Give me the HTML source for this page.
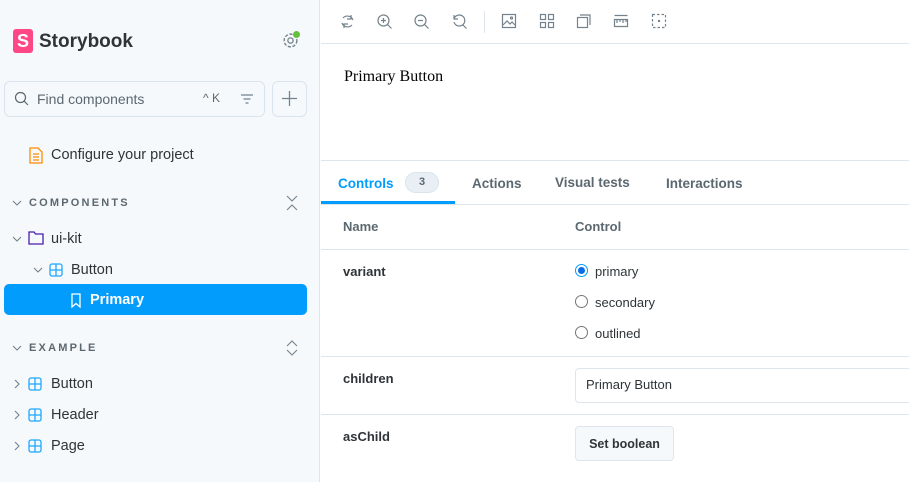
<!DOCTYPE html>
<html><head><meta charset="utf-8"><style>
*{box-sizing:border-box;margin:0;padding:0}
body{width:909px;height:482px;overflow:hidden;font-family:"Liberation Sans",sans-serif;position:relative;background:#fff;color:#2e3438}
.a{position:absolute}
#side{left:0;top:0;width:320px;height:482px;background:#f6f9fc;border-right:1px solid #dfe5ec}
.t{font-size:14.5px;color:#2e3438;white-space:nowrap}
.hd{font-size:11px;font-weight:bold;letter-spacing:2.2px;color:#5c6870}
.lbl{font-size:13px;font-weight:bold;color:#2e3438}
.hr{position:absolute;left:321px;right:0;height:1px;background:#dfe5ec}
svg{position:absolute;overflow:visible}
</style></head><body>
<div id="side" class="a">
  <div class="a" style="left:13px;top:29px;width:20px;height:24px;background:#ff4785;border-radius:3px;color:#fff;font-weight:bold;font-size:18px;text-align:center;line-height:24px">S</div>
  <div class="a" style="left:39px;top:31px;font-size:19px;font-weight:bold;color:#2e3438">Storybook</div>
  <svg style="left:282px;top:32px" width="17" height="17" viewBox="0 0 16 16"><circle cx="8" cy="8" r="6" fill="none" stroke="#73828c" stroke-width="1.3" stroke-dasharray="3 1.5"/><circle cx="8" cy="8" r="2.5" fill="none" stroke="#73828c" stroke-width="1.2"/></svg>
  <div class="a" style="left:293px;top:31px;width:7px;height:7px;border-radius:50%;background:#66bf3c"></div>
  <div class="a" style="left:4px;top:81px;width:261px;height:36px;border:1px solid #d9e4ef;border-radius:6px;background:#f6f9fc"></div>
  <svg style="left:14px;top:91px" width="16" height="16" viewBox="0 0 16 16"><circle cx="6.5" cy="6.5" r="5" fill="none" stroke="#5c6870" stroke-width="1.2"/><path d="M10.2 10.2L14 14" stroke="#5c6870" stroke-width="1.2"/></svg>
  <div class="a t" style="left:37px;top:91px;color:#5c6870;font-size:14px">Find components</div>
  <div class="a" style="left:203px;top:91px;font-size:12px;color:#5c6870">^ K</div>
  <svg style="left:240px;top:92px" width="14" height="14" viewBox="0 0 14 14"><path d="M1 3h12M3.5 7h7M5.5 11h3" stroke="#73828c" stroke-width="1.2"/></svg>
  <div class="a" style="left:272px;top:81px;width:35px;height:36px;border:1px solid #d9e4ef;border-radius:6px"></div>
  <svg style="left:281px;top:90px" width="17" height="17" viewBox="0 0 17 17"><path d="M8.5 1v15M1 8.5h15" stroke="#73828c" stroke-width="1.3"/></svg>
  <svg style="left:29px;top:147px" width="14" height="17" viewBox="0 0 14 17"><path d="M1 1h8l4 4v11H1z" fill="none" stroke="#ff8b00" stroke-width="1.3"/><path d="M4 7h6M4 10h6M4 13h6" stroke="#ff8b00" stroke-width="1.2"/></svg>
  <div class="a t" style="left:51px;top:147px">Configure your project</div>
  <svg style="left:12px;top:199px" width="10" height="8" viewBox="0 0 10 8"><path d="M1 2l4 4 4-4" fill="none" stroke="#73828c" stroke-width="1.1"/></svg>
  <div class="a hd" style="left:29px;top:197px">COMPONENTS</div>
  <svg style="left:286px;top:195px" width="12" height="16" viewBox="0 0 12 16"><path d="M1 1l5 5 5-5M1 15l5-5 5 5" fill="none" stroke="#73828c" stroke-width="1.1"/></svg>
  <svg style="left:12px;top:235px" width="10" height="8" viewBox="0 0 10 8"><path d="M1 2l4 4 4-4" fill="none" stroke="#73828c" stroke-width="1.1"/></svg>
  <svg style="left:28px;top:231px" width="16" height="14" viewBox="0 0 16 14"><path d="M1 1h5l1.5 2H15v10H1z" fill="none" stroke="#4a1cab" stroke-width="1.3"/></svg>
  <div class="a t" style="left:51px;top:231px">ui-kit</div>
  <svg style="left:33px;top:266px" width="10" height="8" viewBox="0 0 10 8"><path d="M1 2l4 4 4-4" fill="none" stroke="#73828c" stroke-width="1.1"/></svg>
  <svg style="left:49px;top:263px" width="14" height="14" viewBox="0 0 14 14"><rect x="1" y="1" width="12" height="12" rx="2" fill="none" stroke="#1ea7fd" stroke-width="1.3"/><path d="M7 1v12M1 7h12" stroke="#1ea7fd" stroke-width="1.3"/></svg>
  <div class="a t" style="left:71px;top:262px">Button</div>
  <div class="a" style="left:4px;top:284px;width:303px;height:31px;background:#029cfd;border-radius:5px"></div>
  <svg style="left:71px;top:293px" width="10" height="15" viewBox="0 0 10 15"><path d="M1 1h8v13l-4-3.5L1 14z" fill="none" stroke="#fff" stroke-width="1.3"/></svg>
  <div class="a t" style="left:90px;top:292px;color:#fff;font-weight:bold">Primary</div>
  <svg style="left:12px;top:344px" width="10" height="8" viewBox="0 0 10 8"><path d="M1 2l4 4 4-4" fill="none" stroke="#73828c" stroke-width="1.1"/></svg>
  <div class="a hd" style="left:29px;top:342px">EXAMPLE</div>
  <svg style="left:286px;top:340px" width="12" height="16" viewBox="0 0 12 16"><path d="M1 6l5-5 5 5M1 10l5 5 5-5" fill="none" stroke="#73828c" stroke-width="1.1"/></svg>
  <svg style="left:13px;top:379px" width="8" height="10" viewBox="0 0 8 10"><path d="M2 1l4 4-4 4" fill="none" stroke="#73828c" stroke-width="1.1"/></svg>
  <svg style="left:28px;top:377px" width="14" height="14" viewBox="0 0 14 14"><rect x="1" y="1" width="12" height="12" rx="2" fill="none" stroke="#1ea7fd" stroke-width="1.3"/><path d="M7 1v12M1 7h12" stroke="#1ea7fd" stroke-width="1.3"/></svg>
  <div class="a t" style="left:51px;top:376px">Button</div>
  <svg style="left:13px;top:410px" width="8" height="10" viewBox="0 0 8 10"><path d="M2 1l4 4-4 4" fill="none" stroke="#73828c" stroke-width="1.1"/></svg>
  <svg style="left:28px;top:408px" width="14" height="14" viewBox="0 0 14 14"><rect x="1" y="1" width="12" height="12" rx="2" fill="none" stroke="#1ea7fd" stroke-width="1.3"/><path d="M7 1v12M1 7h12" stroke="#1ea7fd" stroke-width="1.3"/></svg>
  <div class="a t" style="left:51px;top:407px">Header</div>
  <svg style="left:13px;top:441px" width="8" height="10" viewBox="0 0 8 10"><path d="M2 1l4 4-4 4" fill="none" stroke="#73828c" stroke-width="1.1"/></svg>
  <svg style="left:28px;top:439px" width="14" height="14" viewBox="0 0 14 14"><rect x="1" y="1" width="12" height="12" rx="2" fill="none" stroke="#1ea7fd" stroke-width="1.3"/><path d="M7 1v12M1 7h12" stroke="#1ea7fd" stroke-width="1.3"/></svg>
  <div class="a t" style="left:51px;top:438px">Page</div>
</div>

<div class="hr" style="top:43px"></div>
<svg style="left:340px;top:14px" width="15" height="15" viewBox="0 0 15 15" fill="none" stroke="#73828c" stroke-width="1.2"><path d="M3 4a6 6 0 0 1 10 2M12 11a6 6 0 0 1-10-2M11 1v4H7M4 14v-4h4"/></svg>
<svg style="left:377px;top:14px" width="15" height="15" viewBox="0 0 15 15" fill="none" stroke="#73828c" stroke-width="1.2"><circle cx="6.5" cy="6.5" r="5.5"/><path d="M10.5 10.5l4 4M6.5 4v5M4 6.5h5"/></svg>
<svg style="left:414px;top:14px" width="15" height="15" viewBox="0 0 15 15" fill="none" stroke="#73828c" stroke-width="1.2"><circle cx="6.5" cy="6.5" r="5.5"/><path d="M10.5 10.5l4 4M4 6.5h5"/></svg>
<svg style="left:452px;top:14px" width="15" height="15" viewBox="0 0 15 15" fill="none" stroke="#73828c" stroke-width="1.2"><path d="M2 5a5.5 5.5 0 1 1 0 3M2 1v4h4M10.5 10.5l4 4"/></svg>
<div class="a" style="left:484px;top:11px;width:1px;height:22px;background:#dfe5ec"></div>
<svg style="left:502px;top:14px" width="14" height="14" viewBox="0 0 14 14" fill="none" stroke="#73828c" stroke-width="1.2"><rect x="0.5" y="0.5" width="13" height="13"/><path d="M1 11l4-4 3 3 2-2 3 3"/><circle cx="9.5" cy="4" r="1"/></svg>
<svg style="left:540px;top:14px" width="14" height="14" viewBox="0 0 14 14" fill="none" stroke="#73828c" stroke-width="1.2"><rect x="0.5" y="0.5" width="5" height="5"/><rect x="8.5" y="0.5" width="5" height="5"/><rect x="0.5" y="8.5" width="5" height="5"/><rect x="8.5" y="8.5" width="5" height="5"/></svg>
<svg style="left:577px;top:14px" width="14" height="14" viewBox="0 0 14 14" fill="none" stroke="#73828c" stroke-width="1.2"><rect x="0.5" y="3.5" width="10" height="10"/><path d="M3 1h10v10"/></svg>
<svg style="left:614px;top:15px" width="14" height="12" viewBox="0 0 14 12" fill="none" stroke="#73828c" stroke-width="1.2"><path d="M0.5 0.5h13M0.5 4.5h13v7H0.5zM3 5v3M6 5v2M9 5v3M12 5v2"/></svg>
<svg style="left:652px;top:14px" width="14" height="14" viewBox="0 0 14 14" fill="none" stroke="#73828c" stroke-width="1.2"><rect x="0.5" y="0.5" width="13" height="13" stroke-dasharray="2.5 2"/><circle cx="7" cy="7" r="0.6" fill="#73828c"/></svg>

<div class="a" style="left:344px;top:68px;font-family:'Liberation Serif',serif;font-size:16px;color:#000">Primary Button</div>
<div class="hr" style="top:160px"></div>

<div class="a" style="left:338px;top:176px;font-size:13.5px;font-weight:bold;color:#029cfd">Controls</div>
<div class="a" style="left:405px;top:172px;width:34px;height:21px;border-radius:11px;background:#eaeff5;border:1px solid #d9e4ef;font-size:11px;font-weight:bold;text-align:center;line-height:19px;color:#5c6870">3</div>
<div class="a" style="left:472px;top:176px;font-size:13.5px;font-weight:bold;color:#5c6870">Actions</div>
<div class="a" style="left:555px;top:175px;font-size:13.5px;font-weight:bold;color:#5c6870">Visual tests</div>
<div class="a" style="left:666px;top:176px;font-size:13.5px;font-weight:bold;color:#5c6870">Interactions</div>
<div class="a" style="left:321px;top:201px;width:134px;height:3px;background:#029cfd"></div>
<div class="hr" style="top:204px"></div>

<div class="a" style="left:343px;top:219px;font-size:13px;font-weight:bold;color:#5c6870">Name</div>
<div class="a" style="left:575px;top:219px;font-size:13px;font-weight:bold;color:#5c6870">Control</div>
<div class="hr" style="top:249px"></div>

<div class="a lbl" style="left:343px;top:264px">variant</div>
<div class="a" style="left:575px;top:264px;width:13px;height:13px;border-radius:50%;border:1px solid #029cfd;background:#fff"><div style="margin:2px;width:7px;height:7px;border-radius:50%;background:#0b6ce8"></div></div>
<div class="a" style="left:595px;top:264px;font-size:13px">primary</div>
<div class="a" style="left:575px;top:295px;width:13px;height:13px;border-radius:50%;border:1px solid #767676"></div>
<div class="a" style="left:595px;top:295px;font-size:13px">secondary</div>
<div class="a" style="left:575px;top:326px;width:13px;height:13px;border-radius:50%;border:1px solid #767676"></div>
<div class="a" style="left:595px;top:326px;font-size:13px">outlined</div>
<div class="hr" style="top:356px"></div>

<div class="a lbl" style="left:343px;top:371px">children</div>
<div class="a" style="left:575px;top:368px;width:340px;height:35px;border:1px solid #dfe5ec;border-radius:4px"></div>
<div class="a" style="left:586px;top:377px;font-size:13px">Primary Button</div>
<div class="hr" style="top:414px"></div>

<div class="a lbl" style="left:343px;top:429px">asChild</div>
<div class="a" style="left:575px;top:426px;width:99px;height:35px;border:1px solid #dfe5ec;border-radius:4px;background:#f6f9fc;font-size:12.5px;font-weight:bold;text-align:center;line-height:34px">Set boolean</div>
</body></html>
